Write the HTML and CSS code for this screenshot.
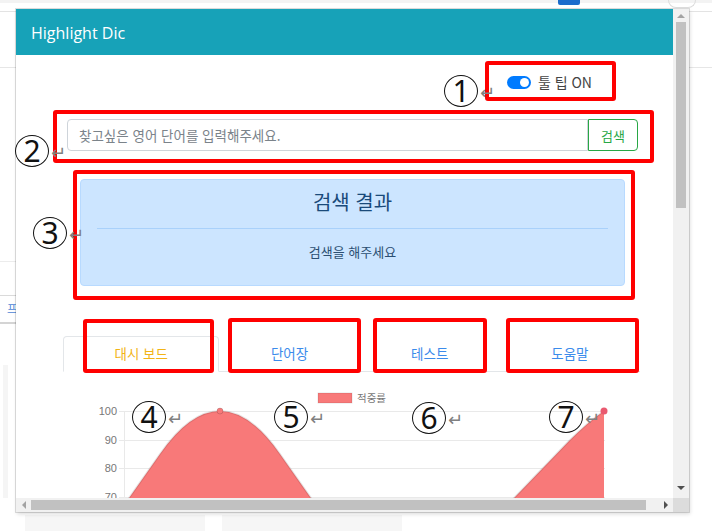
FILE: index.html
```html
<!DOCTYPE html>
<html lang="ko">
<head>
<meta charset="utf-8">
<title>Highlight Dic</title>
<link rel="stylesheet" href="styles.css">
</head>
<body>
<div class="page">
  <div class="pg-head"><span class="pg-badge"></span><span class="pg-cap"></span></div>
  <div class="pg-sec"></div>
  <div class="pg-rule a"></div>
  <div class="pg-rule b"></div>
  <div class="pg-link">프</div>
  <div class="pg-band"></div>
  <div class="pg-foot"><span class="pg-box"></span><span class="pg-box"></span></div>
</div>

<div class="win">
  <div class="vp">
    <div class="doc">
      <header class="hdr">Highlight Dic</header>
      <div class="tip">
        <span class="switch"></span>
        <span class="tip-label">툴 팁 ON</span>
      </div>
      <div class="search">
        <div class="field"><span class="ph">찾고싶은 영어 단어를 입력해주세요.</span></div>
        <button class="btn">검색</button>
      </div>
      <div class="alert">
        <h4 class="alert-title">검색 결과</h4>
        <hr class="alert-rule">
        <p class="alert-text">검색을 해주세요</p>
      </div>
      <nav class="tabs">
        <span class="tab active">대시 보드</span>
        <span class="tab">단어장</span>
        <span class="tab">테스트</span>
        <span class="tab">도움말</span>
      </nav>
      <svg class="chart" width="672" height="140" viewBox="0 0 672 140">
        <rect x="302" y="21" width="34" height="10" fill="#f87979" stroke="rgba(0,0,0,0.1)" stroke-width="1"/>
        <text class="lg" x="341" y="30">적중률</text>
        <g stroke="#e9e9e9" stroke-width="1">
          <line x1="103" y1="39.5" x2="589" y2="39.5"/>
          <line x1="103" y1="68.5" x2="589" y2="68.5"/>
          <line x1="103" y1="96.5" x2="589" y2="96.5"/>
          <line x1="103" y1="125.5" x2="589" y2="125.5"/>
          <line x1="108.5" y1="39" x2="108.5" y2="140"/>
        </g>
        <g class="yl" text-anchor="end">
          <text x="101" y="42.5">100</text>
          <text x="101" y="71.5">90</text>
          <text x="101" y="99.5">80</text>
          <text x="101" y="128.5">70</text>
        </g>
        <path d="M61 200 L144 82 Q174 39 204 39 Q234 39 264 82 L347 200 Z" fill="#f87979"/>
        <path d="M422 200 L499 125 L553 69 Q572 50 588 39 L588 200 Z" fill="#f87979"/>
        <path d="M61 200 L144 82 Q174 39 204 39 Q234 39 264 82 L347 200" fill="none" stroke="rgba(0,0,0,0.1)" stroke-width="2"/>
        <path d="M422 200 L499 125 L553 69 Q572 50 588 39" fill="none" stroke="rgba(0,0,0,0.1)" stroke-width="2"/>
        <circle cx="204" cy="39" r="3" fill="#f87979" stroke="rgba(0,0,0,0.15)" stroke-width="1"/>
        <circle cx="588" cy="39" r="3.5" fill="#e95a70"/>
      </svg>
    </div>
  </div>
  <div class="vbar"><span class="arr up"></span><span class="vthumb"></span><span class="arr down"></span></div>
  <div class="hbar"><span class="arr left"></span><span class="hthumb"></span><span class="arr right"></span></div>
  <div class="corner"></div>
</div>

<div class="ann">
  <div class="rbox rb-tip"></div>
  <div class="rbox rb-search"></div>
  <div class="rbox rb-result"></div>
  <div class="rbox rb-t1"></div>
  <div class="rbox rb-t2"></div>
  <div class="rbox rb-t3"></div>
  <div class="rbox rb-t4"></div>
  <div class="note n1"><span class="num">1</span><span class="ret">↵</span></div>
  <div class="note n2"><span class="num">2</span><span class="ret">↵</span></div>
  <div class="note n3"><span class="num">3</span><span class="ret">↵</span></div>
  <div class="note n4"><span class="num">4</span><span class="ret">↵</span></div>
  <div class="note n5"><span class="num">5</span><span class="ret">↵</span></div>
  <div class="note n6"><span class="num">6</span><span class="ret">↵</span></div>
  <div class="note n7"><span class="num">7</span><span class="ret">↵</span></div>
</div>
</body>
</html>
```
FILE: styles.css
```css
* { box-sizing: border-box; }
html, body { margin: 0; padding: 0; }
body {
  width: 712px;
  height: 531px;
  overflow: hidden;
  position: relative;
  background: #fff;
  font-family: "Noto Sans CJK KR", "Noto Sans", sans-serif;
}

/* background page */
.page { width: 712px; height: 531px; }
.pg-head {
  height: 12px;
  display: flex;
  border-bottom: 1px solid #e3e3e3;
  background: linear-gradient(#f3f3f3 0 3px, #fff 3px);
}
.pg-badge {
  margin-left: 558px;
  width: 22px;
  height: 5px;
  background: #1c6ccc;
  border-radius: 0 0 2px 2px;
}
.pg-cap {
  margin-left: 88px;
  width: 28px;
  height: 8px;
  border: 1px solid #dcdcdc;
  border-top: 0;
  border-radius: 0 0 10px 10px;
}
.pg-sec { height: 56px; border-bottom: 1px solid #e6e6e6; }
.pg-rule { width: 16px; border-bottom: 1px solid #ececec; }
.pg-rule.a { height: 194px; }
.pg-rule.b { height: 34px; border-bottom-color: #dadada; }
.pg-link {
  width: 16px;
  height: 28px;
  padding: 6px 0 0 7px;
  border-bottom: 2px solid #d4d4d4;
  font-size: 11px;
  line-height: 12px;
  color: #4d86d6;
  overflow: hidden;
}
.pg-band { margin: 41px 0 0 3px; width: 5px; height: 133px; background: #f5f5f5; }
.pg-foot { display: flex; gap: 17px; margin: 17px 0 0 25px; }
.pg-box { width: 180px; height: 20px; background: #f6f6f6; }

/* popup window */
.win {
  position: absolute;
  left: 16px;
  top: 9px;
  width: 673px;
  height: 503px;
  display: grid;
  grid-template-columns: 657px 16px;
  grid-template-rows: 489px 14px;
  background: #fff;
  box-shadow: 0 0 0 1px rgba(0,0,0,0.13), 1px 2px 4px rgba(0,0,0,0.15);
}
.vp { overflow: hidden; }
.doc { width: 672px; }

.hdr {
  height: 46px;
  display: flex;
  align-items: center;
  padding: 1px 0 0 15px;
  background: #17a2b8;
  color: #fff;
  font-family: "Open Sans", "Noto Sans", sans-serif;
  font-size: 16px;
}

.tip {
  height: 37px;
  display: flex;
  justify-content: flex-end;
  align-items: center;
  padding: 18px 96px 0 0;
}
.switch {
  position: relative;
  width: 24px;
  height: 13px;
  border-radius: 7px;
  background: #007bff;
}
.switch::after {
  content: "";
  position: absolute;
  right: 2px;
  top: 2px;
  width: 9px;
  height: 9px;
  border-radius: 50%;
  background: #fff;
}
.tip-label { margin-left: 7px; font-size: 14px; line-height: 19px; color: #444; }

.search { display: flex; height: 32px; margin: 27px 50px 0 51px; }
.field {
  flex: 1;
  display: flex;
  align-items: center;
  padding-left: 11px;
  border: 1px solid #ced4da;
  border-radius: 4px 0 0 4px;
}
.ph { font-size: 13.5px; color: #7b838a; }
.btn {
  width: 50px;
  margin: 0;
  padding: 0;
  border: 1px solid #28a745;
  border-radius: 0 4px 4px 0;
  background: #fff;
  color: #28a745;
  font-family: "Noto Sans CJK KR", sans-serif;
  font-size: 13px;
}

.alert {
  height: 107px;
  margin: 28px 63px 0 64px;
  padding-top: 10px;
  background: #cce5ff;
  border: 1px solid #b8daff;
  border-radius: 4px;
  color: #1a4a7a;
  text-align: center;
}
.alert-title { margin: 0; font-size: 20px; line-height: 24px; font-weight: 400; }
.alert-rule { margin: 14px 16px 0; border: 0; border-top: 1px solid #a9d1fb; }
.alert-text { margin: 14px 0 0; font-size: 13px; line-height: 18px; color: #2b4f72; }

.tabs {
  display: flex;
  height: 36px;
  margin: 50px 48px 0 47px;
  border-bottom: 1px solid #e3e6e9;
}
.tab {
  flex: 1 1 auto;
  margin-bottom: -1px;
  border: 1px solid transparent;
  border-radius: 4px 4px 0 0;
  text-align: center;
  font-size: 13.5px;
  line-height: 33px;
  color: #3b8beb;
}
.tab.active {
  color: #f2b416;
  border-color: #e3e6e9 #e3e6e9 #fff;
  background: #fff;
}

.chart { display: block; }
.chart .lg { font-family: "Noto Sans CJK KR", sans-serif; font-size: 10.5px; fill: #777; }
.chart .yl { font-family: "Liberation Sans", Arial, sans-serif; font-size: 11px; fill: #777; }

/* scrollbars */
.vbar {
  display: flex;
  flex-direction: column;
  align-items: center;
  background: #f1f1f1;
}
.vthumb { margin-top: 4px; width: 10px; height: 186px; background: #c1c1c1; }
.hbar { display: flex; align-items: center; background: #f1f1f1; }
.hthumb { margin-left: 5px; width: 615px; height: 10px; background: #c1c1c1; }
.corner { background: #dcdcdc; }
.arr { width: 0; height: 0; border: 4px solid transparent; }
.arr.up { margin-top: 1px; border-bottom-color: #a3a3a3; }
.arr.down { margin-top: auto; margin-bottom: 4px; border-top-color: #505050; }
.arr.left { margin-left: 2px; border-right-color: #a3a3a3; }
.arr.right { margin-left: auto; margin-right: 1px; border-left-color: #505050; }

/* annotation overlay */
.ann { position: absolute; left: 0; top: 0; width: 712px; height: 531px; pointer-events: none; }
.rbox { position: absolute; border: 4px solid #f00; border-radius: 3px; }
.rb-tip { left: 485px; top: 61px; width: 131px; height: 40px; }
.rb-search { left: 53px; top: 110px; width: 601px; height: 53px; }
.rb-result { left: 73px; top: 170px; width: 562px; height: 130px; }
.rb-t1 { left: 83px; top: 319px; width: 131px; height: 54px; }
.rb-t2 { left: 228px; top: 318px; width: 133px; height: 55px; }
.rb-t3 { left: 373px; top: 318px; width: 114px; height: 55px; }
.rb-t4 { left: 506px; top: 318px; width: 133px; height: 55px; }

.note { position: absolute; display: flex; align-items: flex-start; }
.num {
  width: 34px;
  height: 32px;
  display: flex;
  align-items: center;
  justify-content: center;
  border: 1.5px solid #111;
  border-radius: 50%;
  background: transparent;
  font-family: "Noto Sans", sans-serif;
  font-size: 30px;
  line-height: 1;
  color: #111;
}
.ret {
  margin: 9px 0 0 2px;
  font-family: "DejaVu Sans", sans-serif;
  font-size: 18px;
  line-height: 1;
  color: #808080;
}
.n1 { left: 444px; top: 75px; }
.n2 { left: 15px; top: 135px; }
.n3 { left: 33px; top: 217px; }
.n4 { left: 132px; top: 401px; }
.n5 { left: 274px; top: 401px; }
.n6 { left: 412px; top: 402px; }
.n7 { left: 549px; top: 401px; }
```
